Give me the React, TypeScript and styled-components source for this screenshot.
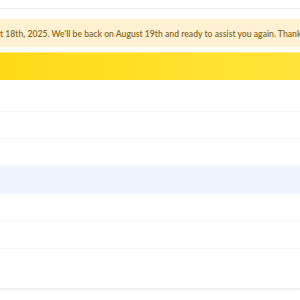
import styled, { createGlobalStyle } from 'styled-components';

const GlobalStyle = createGlobalStyle`
  html, body {
    margin: 0;
    padding: 0;
    background: #ffffff;
  }
  body {
    font-family: 'Lato', 'Noto Sans', sans-serif;
    overflow: hidden;
  }
`;

const Page = styled.div`
  width: 300px;
  height: 300px;
  overflow: hidden;
  display: flex;
  flex-direction: column;
`;

const TopBar = styled.div`
  height: 8px;
  border-bottom: 1px solid #ececec;
`;

const Notice = styled.div`
  margin-top: 10px;
  height: 28px;
  background: #fff1d1;
  display: flex;
  align-items: center;
  overflow: hidden;
`;

const Ticker = styled.span`
  white-space: nowrap;
  font-size: 8.65px;
  font-weight: 600;
  color: #8b6a1c;
`;

const Highlight = styled.div`
  margin-top: 5px;
  height: 27px;
  border-top: 1px solid #ffe889;
  background: linear-gradient(90deg, #ffd916 0%, #ffe12c 60%, #ffe33a 100%);
`;

const List = styled.div`
  margin-top: 5px;
  display: flex;
  flex-direction: column;
  box-shadow: 0 2px 2px rgba(0, 0, 0, 0.08);
`;

const Row = styled.div<{ $active?: boolean; $h?: number; $plain?: boolean }>`
  height: ${p => p.$h ?? 27}px;
  border-bottom: 1px solid ${p => (p.$active ? '#eef4ff' : p.$plain ? 'transparent' : '#f5f5f5')};
  background: ${p => (p.$active ? '#eef5fe' : '#ffffff')};
`;

export default function App() {
  return (
    <Page>
      <GlobalStyle />
      <TopBar />
      <Notice>
        <Ticker>
          t 18th, 2025. We'll be back on August 19th and ready to assist you again. Thank you for your patience.
        </Ticker>
      </Notice>
      <Highlight />
      <List>
        <Row $h={26} />
        <Row $h={26} />
        <Row $h={26} />
        <Row $h={27} $active />
        <Row $h={26} />
        <Row $h={27} />
        <Row $h={38} $plain />
      </List>
    </Page>
  );
}
